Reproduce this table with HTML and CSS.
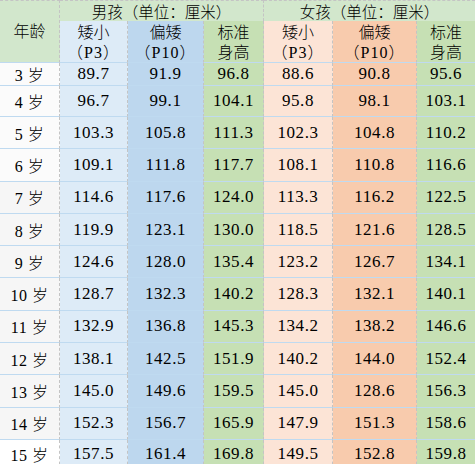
FILE: index.html
```html
<!DOCTYPE html>
<html lang="zh-CN">
<head>
<meta charset="utf-8">
<title>儿童身高表</title>
<link rel="stylesheet" href="styles.css">
</head>
<body>
<div class="sheet">
  <div class="c age-head">年龄</div>
  <div class="c group-head boys">男孩（单位：厘米）</div>
  <div class="c group-head girls">女孩（单位：厘米）</div>

  <div class="c sub b1"><span>矮小</span><span class="pct">（P3）</span></div>
  <div class="c sub b2"><span>偏矮</span><span class="pct">（P10）</span></div>
  <div class="c sub std"><span>标准</span><span>身高</span></div>
  <div class="c sub g1"><span>矮小</span><span class="pct">（P3）</span></div>
  <div class="c sub g2"><span>偏矮</span><span class="pct">（P10）</span></div>
  <div class="c sub std last"><span>标准</span><span>身高</span></div>

  <div class="c age lite">3 岁</div><div class="c num b1">89.7</div><div class="c num b2">91.9</div><div class="c num std">96.8</div><div class="c num g1">88.6</div><div class="c num g2">90.8</div><div class="c num std last">95.6</div>
  <div class="c age lite">4 岁</div><div class="c num b1">96.7</div><div class="c num b2">99.1</div><div class="c num std">104.1</div><div class="c num g1">95.8</div><div class="c num g2">98.1</div><div class="c num std last">103.1</div>
  <div class="c age lite">5 岁</div><div class="c num b1">103.3</div><div class="c num b2">105.8</div><div class="c num std">111.3</div><div class="c num g1">102.3</div><div class="c num g2">104.8</div><div class="c num std last">110.2</div>
  <div class="c age lite">6 岁</div><div class="c num b1">109.1</div><div class="c num b2">111.8</div><div class="c num std">117.7</div><div class="c num g1">108.1</div><div class="c num g2">110.8</div><div class="c num std last">116.6</div>
  <div class="c age">7 岁</div><div class="c num b1">114.6</div><div class="c num b2">117.6</div><div class="c num std">124.0</div><div class="c num g1">113.3</div><div class="c num g2">116.2</div><div class="c num std last">122.5</div>
  <div class="c age">8 岁</div><div class="c num b1">119.9</div><div class="c num b2">123.1</div><div class="c num std">130.0</div><div class="c num g1">118.5</div><div class="c num g2">121.6</div><div class="c num std last">128.5</div>
  <div class="c age">9 岁</div><div class="c num b1">124.6</div><div class="c num b2">128.0</div><div class="c num std">135.4</div><div class="c num g1">123.2</div><div class="c num g2">126.7</div><div class="c num std last">134.1</div>
  <div class="c age">10 岁</div><div class="c num b1">128.7</div><div class="c num b2">132.3</div><div class="c num std">140.2</div><div class="c num g1">128.3</div><div class="c num g2">132.1</div><div class="c num std last">140.1</div>
  <div class="c age">11 岁</div><div class="c num b1">132.9</div><div class="c num b2">136.8</div><div class="c num std">145.3</div><div class="c num g1">134.2</div><div class="c num g2">138.2</div><div class="c num std last">146.6</div>
  <div class="c age">12 岁</div><div class="c num b1">138.1</div><div class="c num b2">142.5</div><div class="c num std">151.9</div><div class="c num g1">140.2</div><div class="c num g2">144.0</div><div class="c num std last">152.4</div>
  <div class="c age">13 岁</div><div class="c num b1">145.0</div><div class="c num b2">149.6</div><div class="c num std">159.5</div><div class="c num g1">145.0</div><div class="c num g2">128.6</div><div class="c num std last">156.3</div>
  <div class="c age">14 岁</div><div class="c num b1">152.3</div><div class="c num b2">156.7</div><div class="c num std">165.9</div><div class="c num g1">147.9</div><div class="c num g2">151.3</div><div class="c num std last">158.6</div>
  <div class="c age white">15 岁</div><div class="c num b1">157.5</div><div class="c num b2">161.4</div><div class="c num std">169.8</div><div class="c num g1">149.5</div><div class="c num g2">152.8</div><div class="c num std last">159.8</div>
</div>
</body>
</html>
```

FILE: styles.css
```css
html, body {
  margin: 0;
  padding: 0;
  background: #ffffff;
  overflow: hidden;
}

.sheet {
  display: grid;
  grid-template-columns: 60px 68px 76px 60px 69px 84px 58px;
  grid-template-rows: 21px 42px 23px 31px repeat(10, 32.3px) 30px;
  width: 475px;
  font-family: "Liberation Serif", "Noto Sans CJK SC", serif;
  font-size: 16px;
  font-weight: 300;
  color: #000000;
}

.c {
  box-sizing: border-box;
  display: flex;
  align-items: center;
  justify-content: center;
  border-right: 1px dashed #c4c4c4;
  border-bottom: 1px solid #bfdaf0;
  white-space: nowrap;
}

.last {
  border-right: none;
}

.age-head {
  grid-row: 1 / span 2;
  background: #d2e7cc;
  border-top: 1px dashed #c4c4c4;
  font-family: "Noto Sans CJK SC", sans-serif;
  font-size: 16px;
  padding-bottom: 3px;
}

.group-head {
  grid-column: span 3;
  background: #d2e7cc;
  border-top: 1px dashed #c4c4c4;
  border-bottom: none;
  font-family: "Noto Sans CJK SC", sans-serif;
  font-size: 15.5px;
  line-height: 20px;
}

.group-head.girls {
  border-right: none;
}

.sub {
  flex-direction: column;
  font-family: "Liberation Serif", "Noto Sans CJK SC", sans-serif;
  font-size: 16px;
  line-height: 20px;
  padding-top: 3px;
}

.pct {
  letter-spacing: 1px;
}

.age {
  background: #f6f6f6;
  font-size: 16px;
  letter-spacing: 0.5px;
}

.age.lite {
  background: #fbfbfb;
}

.age.white {
  background: #ffffff;
}

.num {
  font-size: 17px;
  font-weight: 400;
  letter-spacing: 0.6px;
}

.b1 { background: #ddebf7; }
.b2 { background: #bdd7ee; }
.std { background: #c6e0b4; }
.g1 { background: #fce4d6; }
.g2 { background: #f8cbad; }
```
